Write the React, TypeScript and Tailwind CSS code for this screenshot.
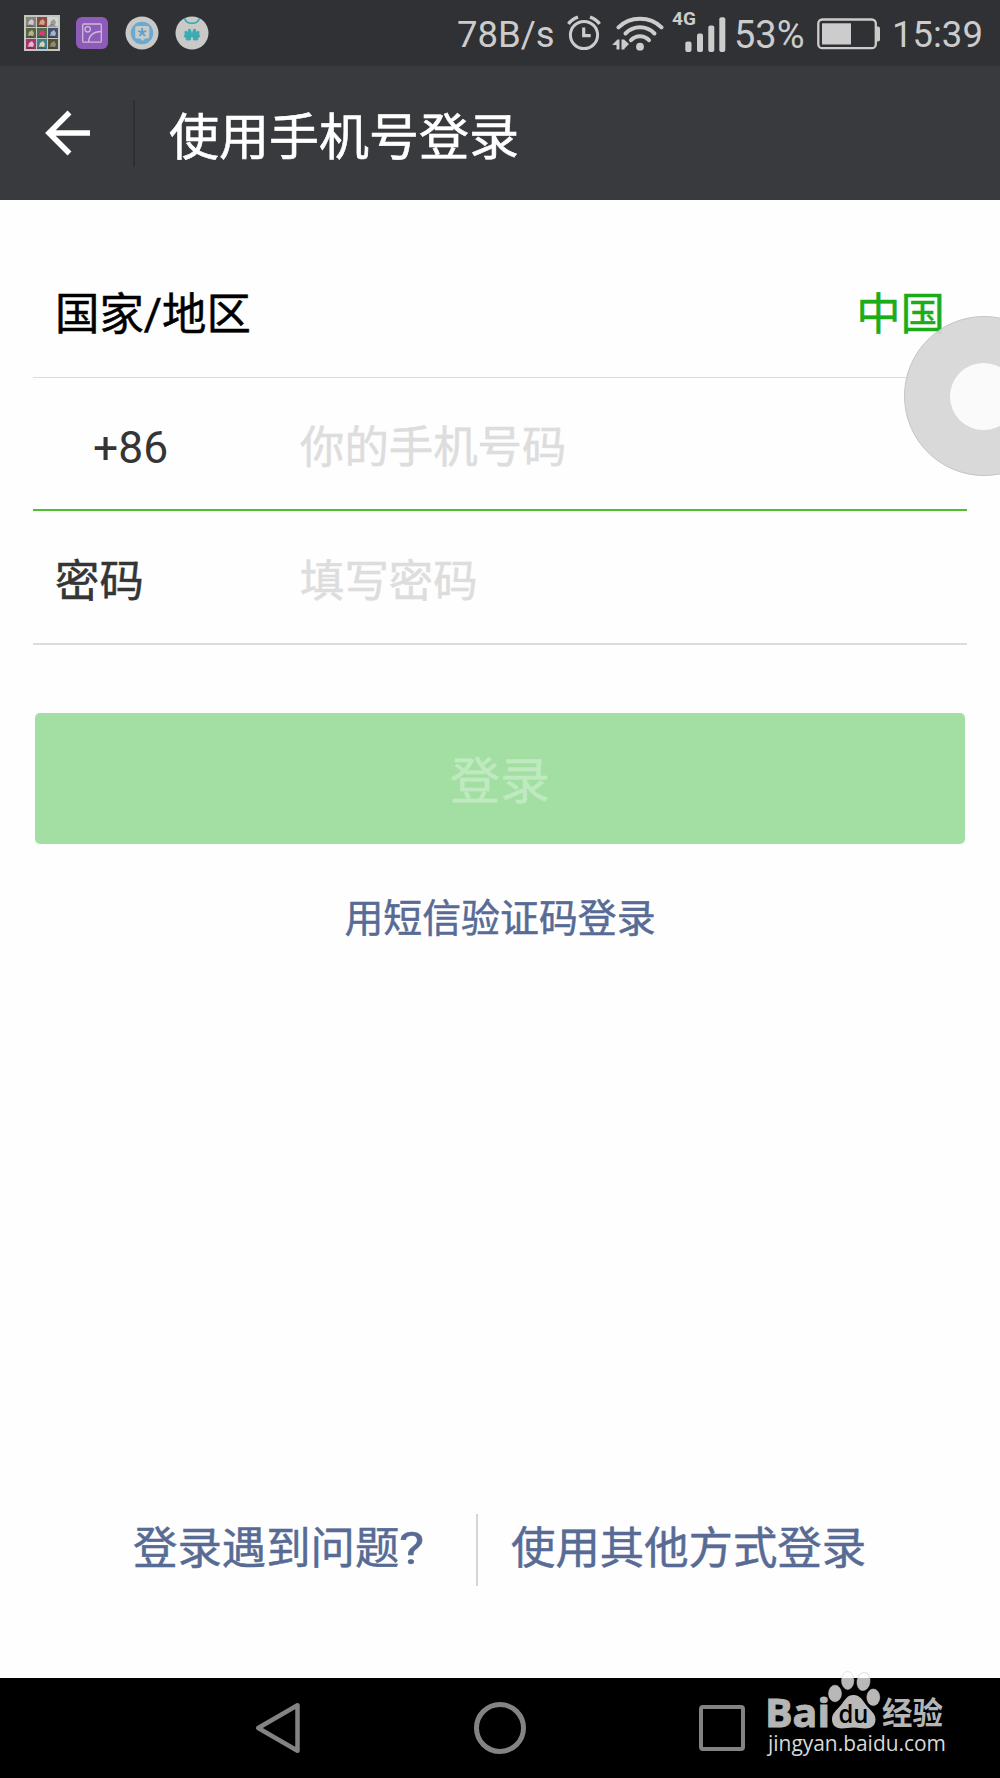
import { useState } from 'react';

const thumbnails = [
  { color: '#7f8a75', accent: '#d9c3dc' },
  { color: '#8a4a42', accent: '#d3a08c' },
  { color: '#d2d2d0', accent: '#9c9c9a' },
  { color: '#5a6440', accent: '#b5b196' },
  { color: '#4c7048', accent: '#e0357f' },
  { color: '#44506c', accent: '#a8b3c8' },
  { color: '#a83466', accent: '#e6b5cb' },
  { color: '#3f7f92', accent: '#d8d3a6' },
  { color: '#57502f', accent: '#8b8c80' }
];

function GalleryIcon() {
  return (
    <div className="grid h-9 w-9 grid-cols-3 gap-px bg-[#c4c4c2] p-[2px]">
      {thumbnails.map(({ color, accent }) => (
        <svg key={color} viewBox="0 0 10 10" className="h-full w-full">
          <rect width="10" height="10" fill={color} />
          <path d="M2 8 3 4l3-2 2 3-1 3Z" fill={accent} />
          <path d="M0 9 4 7l6 3H0Z" fill="#2c2c2c" opacity=".35" />
        </svg>
      ))}
    </div>
  );
}

function PictureIcon() {
  return (
    <svg viewBox="0 0 32 32" className="h-8 w-8">
      <rect width="32" height="32" rx="6" fill="#8f5bb9" />
      <g fill="none" stroke="#cdb9dc" strokeWidth="1.3">
        <rect x="6.7" y="7" width="18.6" height="18.2" rx="1" />
        <circle cx="11.7" cy="12.3" r="2.7" />
        <path d="M12.5 25c.5-6.5 5-10.3 12.5-10.5" />
      </g>
    </svg>
  );
}

function ChatStarIcon() {
  return (
    <svg viewBox="0 0 34 34" className="h-[34px] w-[34px]">
      <circle cx="17" cy="17" r="16.5" fill="#c9c9c7" />
      <circle cx="17" cy="17" r="11.2" fill="#6aa9d2" />
      <path
        d="M12 10h10.500a1.800 1.800 0 0 1 1.800 1.800v9a1.800 1.800 0 0 1-1.800 1.800H20L17.500 25 15 22.600h-3a1.800 1.800 0 0 1-1.800-1.800v-9A1.800 1.800 0 0 1 12 10Z"
        fill="#c9c9c7"
      />
      <path
        d="M17.2 16.400V12M17.200 16.400l-4-1.400M17.200 16.400l4-1.400M17.200 16.400l-2.600 3.700M17.200 16.400l2.600 3.700"
        stroke="#5a9fce"
        strokeWidth="1.8"
        fill="none"
      />
    </svg>
  );
}

function PetalIcon() {
  return (
    <svg viewBox="0 0 34 34" className="h-[34px] w-[34px]">
      <circle cx="17" cy="17" r="16.5" fill="#c9c9c7" />
      <path
        d="M9.500 2.200C11.500 9 22.500 9 24.500 2.200"
        stroke="#35abaf"
        strokeWidth="1.6"
        fill="none"
      />
      <g fill="#3bacb3">
        <ellipse cx="14.9" cy="17.5" rx="2" ry="4.8" transform="rotate(-8 14.9 17.5)" />
        <ellipse cx="19.1" cy="17.5" rx="2" ry="4.8" transform="rotate(8 19.1 17.5)" />
        <ellipse cx="12.4" cy="19" rx="1.9" ry="4.6" transform="rotate(-30 12.4 19)" />
        <ellipse cx="21.6" cy="19" rx="1.9" ry="4.6" transform="rotate(30 21.6 19)" />
        <ellipse cx="12.2" cy="21.2" rx="1.7" ry="3.9" transform="rotate(-55 12.2 21.2)" />
        <ellipse cx="21.8" cy="21.2" rx="1.7" ry="3.9" transform="rotate(55 21.8 21.2)" />
        <ellipse cx="13.4" cy="23.3" rx="2.8" ry="1.2" />
        <ellipse cx="20.6" cy="23.3" rx="2.8" ry="1.2" />
      </g>
    </svg>
  );
}

function AlarmIcon() {
  return (
    <svg
      viewBox="0 0 34 36"
      className="h-9 w-[34px]"
      fill="none"
      stroke="#cccccc"
    >
      <circle cx="17" cy="20" r="13.6" strokeWidth="3" />
      <path d="M16.7 12.5v8.2h7" strokeWidth="3.200" />
      <path
        d="M1.500 9C3.500 6 7 3.300 11 2.100M32.500 9C30.500 6 27 3.300 23 2.100"
        strokeWidth="3.4"
      />
    </svg>
  );
}

function WifiIcon() {
  return (
    <svg viewBox="0 0 52 36" className="h-9 w-[52px]">
      <g fill="none" stroke="#cccccc" strokeWidth="4" strokeLinecap="round">
        <path d="M6.5 12.300c11.500-11.500 31.500-11.500 43 0" />
        <path d="M13.500 18.500c8-8.200 21-8.200 29 0" />
        <path d="M19 25.200c5-5.300 13-5.300 18 0" />
      </g>
      <circle cx="28" cy="31.700" r="3.9" fill="#cccccc" />
      <path
        d="M.5 29.500 5.500 24.500H7.500v10H4.500v-4.500H.5ZM9.500 24.500h3v10h-3ZM12 24.500l5 4.500-5 5Z"
        fill="#cccccc"
      />
    </svg>
  );
}

function SignalIcon() {
  return (
    <svg
      viewBox="0 0 54 42"
      className="h-[42px] w-[54px] overflow-visible"
      fill="#cccccc"
    >
      <text
        x="0"
        y="14.3"
        fontSize="19"
        fontWeight="700"
        fontFamily="Roboto"
      >
        4G
      </text>
      <rect x="13.3" y="30.5" width="6.2" height="10.500" rx="2" />
      <rect x="25" y="22.5" width="6" height="18.500" rx="2" />
      <rect x="36.3" y="14.500" width="6" height="26.500" rx="2" />
      <rect x="47.3" y="6.300" width="6" height="34.700" rx="2" />
    </svg>
  );
}

function BatteryIcon() {
  return (
    <svg viewBox="0 0 64 32" className="h-8 w-16" fill="#cccccc">
      <rect
        x="1.3"
        y="1.5"
        width="57.5"
        height="28.7"
        rx="4"
        fill="none"
        stroke="#cccccc"
        strokeWidth="2.3"
      />
      <rect x="5" y="5.3" width="29" height="21.2" />
      <path d="M59.5 8.5h1.500q2 0 2 2v11q0 2-2 2h-1.500Z" />
    </svg>
  );
}

function StatusBar() {
  return (
    <div className="flex h-[66px] items-center bg-[#303135] text-[36.5px] text-[#cccccc]">
      <div className="flex items-center pl-6">
        <GalleryIcon />
        <div className="ml-4">
          <PictureIcon />
        </div>
        <div className="ml-[17px]">
          <ChatStarIcon />
        </div>
        <div className="ml-4">
          <PetalIcon />
        </div>
      </div>
      <div className="flex flex-1 items-center">
        <span className="ml-[248px] w-[110px] pt-1 leading-none whitespace-nowrap">
          78B/s
        </span>
        <AlarmIcon />
        <div className="ml-[11px]">
          <WifiIcon />
        </div>
        <div className="-mt-[3px] ml-[8px]">
          <SignalIcon />
        </div>
        <span className="ml-[8px] w-[83px] pt-1 text-[38px] leading-none whitespace-nowrap">
          53%
        </span>
        <div className="mt-[2px]">
          <BatteryIcon />
        </div>
        <span className="ml-[11px] pt-1 leading-none whitespace-nowrap">
          15:39
        </span>
      </div>
    </div>
  );
}

function Header() {
  return (
    <header className="flex h-[134px] items-center bg-[#393a3e]">
      <button className="ml-[45px]" aria-label="返回">
        <svg
          viewBox="0 0 46 46"
          className="h-[46px] w-[46px]"
          fill="none"
          stroke="#ffffff"
          strokeWidth="5.5"
        >
          <path d="M24.5 2.5 4 23l20.5 20.500M4 23h41" />
        </svg>
      </button>
      <div className="ml-[42px] h-[67px] w-[2px] bg-[#2e2f33]" />
      <h1 className="ml-[34px] pt-[9px] text-[50px] leading-none font-normal text-white [-webkit-text-stroke:0.6px]">
        使用手机号登录
      </h1>
    </header>
  );
}

function FloatingBall() {
  return (
    <div className="absolute top-[316px] right-0 h-40 w-[96.5px] overflow-hidden">
      <div className="flex h-40 w-40 items-center justify-center rounded-full border border-[#c4c4c4] bg-[#d6d6d6]/93">
        <div className="h-[67px] w-[67px] rounded-full bg-[#fafafa]" />
      </div>
    </div>
  );
}

function LoginForm() {
  const [phone, setPhone] = useState('');
  const [password, setPassword] = useState('');

  return (
    <form className="flex flex-col px-[33px] pt-[46px] text-[44.4px] [-webkit-text-stroke:0.5px]">
      <div className="flex h-[132px] items-center justify-between border-b border-[#dcdcdc] px-[22px] pt-[7px]">
        <span className="text-black">国家/地区</span>
        <span className="text-[#1aad19]">中国</span>
      </div>
      <label className="flex h-[133px] items-center border-b-2 border-[#4fc02c] pt-[9px] pl-[22px]">
        <span className="w-[245px] pl-[38px] text-[#353535] [-webkit-text-stroke:0px]">
          +86
        </span>
        <input
          className="min-w-0 flex-1 outline-none placeholder:text-[#dddddd]"
          placeholder="你的手机号码"
          value={phone}
          onChange={e => setPhone(e.target.value)}
        />
      </label>
      <label className="flex h-[134px] items-center border-b-2 border-[#dcdcdc] pt-[10px] pl-[22px]">
        <span className="w-[245px] text-[#353535]">密码</span>
        <input
          type="password"
          className="min-w-0 flex-1 outline-none placeholder:text-[#dddddd]"
          placeholder="填写密码"
          value={password}
          onChange={e => setPassword(e.target.value)}
        />
      </label>
      <button
        type="button"
        className="mx-[2px] mt-[67.5px] h-[131px] rounded-[5px] bg-[#a3dfa3] pt-[8px] text-[50px] text-[#bfe9bf]"
      >
        登录
      </button>
      <a className="mt-[46px] text-center text-[38.9px] text-[#576b95]">
        用短信验证码登录
      </a>
    </form>
  );
}

function Watermark() {
  return (
    <div className="absolute top-[-8px] left-[766px] h-[96px] w-[190px]">
      <svg viewBox="0 0 190 96" className="h-full w-full overflow-visible">
        <g fill="#b5b5b5" fontWeight="700">
          <text
            x="-1"
            y="57"
            fontSize="40"
            fontFamily="Open Sans"
            textLength="65"
            lengthAdjust="spacingAndGlyphs"
            stroke="#b5b5b5"
            strokeWidth="1"
          >
            Bai
          </text>
          <text
            x="116"
            y="54"
            fontSize="31"
            fontFamily="Noto Sans CJK SC"
            textLength="61"
            lengthAdjust="spacingAndGlyphs"
          >
            经验
          </text>
        </g>
        {/* translucent, the toes reach over the white page */}
        <g fill="#ffffff" fillOpacity=".72" stroke="#c8c8c8" strokeOpacity=".5">
          <ellipse cx="69" cy="23.5" rx="6.5" ry="8.3" />
          <ellipse cx="81.7" cy="10.5" rx="6.2" ry="9" />
          <ellipse cx="97.5" cy="11.5" rx="6.5" ry="9" transform="rotate(8 97.5 11.5)" />
          <ellipse cx="107.3" cy="27.3" rx="6.5" ry="8.3" />
        </g>
        <path
          d="M87.5 25c7 0 9.500 6 13 10.500 4 5 9 8 9 14 0 6-4 9-10 9-5 0-7-1-12-1s-7 1-12 1c-6 0-9.500-3.500-9.500-9.500 0-6 5-9 9-14C79 30 81 25 87.5 25Z"
          fill="#b9b9b9"
        />
        <text
          x="72.500"
          y="53"
          fontSize="25"
          fontFamily="Open Sans"
          fontWeight="600"
          fill="#000000"
          textLength="30"
          lengthAdjust="spacingAndGlyphs"
        >
          du
        </text>
        <text
          x="2"
          y="81"
          fontSize="22.5"
          fontFamily="Open Sans"
          fill="#d8d8d8"
          textLength="178"
          lengthAdjust="spacingAndGlyphs"
        >
          jingyan.baidu.com
        </text>
      </svg>
    </div>
  );
}

function NavigationBar() {
  return (
    <nav className="relative flex h-[100px] items-center bg-black">
      <svg
        viewBox="0 0 46 54"
        className="ml-[255px] h-[54px] w-[46px]"
        fill="none"
        stroke="#838383"
        strokeWidth="4.5"
        strokeLinejoin="round"
      >
        <path d="M3.2 27 42.5 4.300v45.400Z" />
      </svg>
      <div className="ml-[173px] h-[52px] w-[52px] rounded-full border-[5px] border-[#838383]" />
      <div className="ml-[173px] h-[46px] w-[46px] rounded-[4px] border-[4.5px] border-[#838383]" />
      <Watermark />
    </nav>
  );
}

export default function App() {
  return (
    <div className="relative flex h-[1778px] w-[1000px] flex-col overflow-hidden bg-[#fefefe] font-['Roboto','Noto_Sans_CJK_SC',sans-serif]">
      <StatusBar />
      <Header />
      <main className="flex flex-1 flex-col justify-between">
        <LoginForm />
        <div className="mb-[92px] flex h-[72px] items-center pl-[133px] text-[44.4px] text-[#576b95] [-webkit-text-stroke:0.5px]">
          <a className="-mt-[2px] w-[343px] whitespace-nowrap">
            登录遇到问题
            <span className="inline-block origin-left scale-x-120">?</span>
          </a>
          <div className="h-full w-[2px] bg-[#d5d5d5]" />
          <a className="-mt-[2px] ml-[33px] whitespace-nowrap">
            使用其他方式登录
          </a>
        </div>
      </main>
      <NavigationBar />
      <FloatingBall />
    </div>
  );
}
